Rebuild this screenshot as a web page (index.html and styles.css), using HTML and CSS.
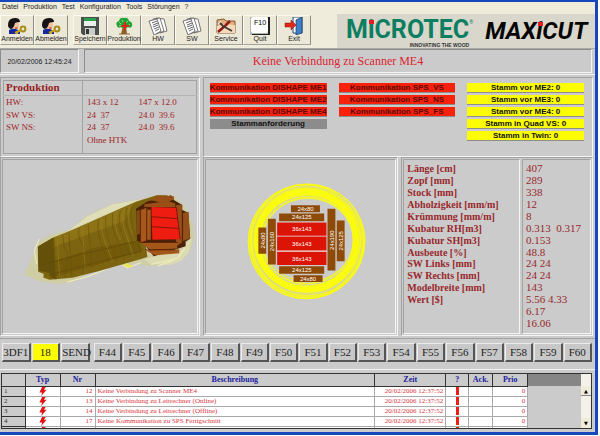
FILE: index.html
```html
<!DOCTYPE html>
<html lang="de">
<head>
<meta charset="utf-8">
<title>MAXiCUT</title>
<link rel="stylesheet" href="styles.css">
</head>
<body>
<div class="window">
  <nav class="menu">
    <a href="#">Datei</a><a href="#">Produktion</a><a href="#">Test</a><a href="#">Konfiguration</a><a href="#">Tools</a><a href="#">Störungen</a><a href="#">?</a>
  </nav>
  <header class="toolbar">
    <div class="group">
      <button class="tool"><svg viewBox="0 0 20 18"><path d="M2 17v-4l5-2 6 3v3z" fill="#18289c"/><circle cx="8" cy="8" r="4" fill="#f3c29a"/><path d="M1 8q0-7 7-7 5 0 5 4-3 0-5 1-1 5-4 6-3-1-3-4z" fill="#171216"/><path d="M8 11l3 0" stroke="#c22" stroke-width="1"/><circle cx="16" cy="12" r="2.4" fill="none" stroke="#a58c16" stroke-width="2"/><path d="M14 13l-6 3M10 14v3" stroke="#c2a51c" stroke-width="2"/></svg>Anmelden</button>
      <button class="tool"><svg viewBox="0 0 20 18"><path d="M2 17v-4l5-2 6 3v3z" fill="#18289c"/><circle cx="8" cy="8" r="4" fill="#f3c29a"/><path d="M1 8q0-7 7-7 5 0 5 4-3 0-5 1-1 5-4 6-3-1-3-4z" fill="#171216"/><path d="M8 11l3 0" stroke="#c22" stroke-width="1"/><circle cx="16" cy="12" r="2.4" fill="none" stroke="#a58c16" stroke-width="2"/><path d="M14 13l-6 3M10 14v3" stroke="#c2a51c" stroke-width="2"/></svg>Abmelden</button>
    </div>
    <div class="group">
      <button class="tool"><svg viewBox="0 0 20 18"><path d="M1 0h18v18H3l-2-2z" fill="#4b504d"/><path d="M4 1h12v8H4z" fill="#e9f1ea"/><path d="M4 1h12v3H4z" fill="#27a04b"/><path d="M5 11h10v7H5z" fill="#c9cdcb"/><path d="M6 12h3v5H6z" fill="#333"/></svg>Speichern</button>
      <button class="tool"><svg viewBox="0 0 20 18"><path d="M9 9h3l1 8H7z" fill="#8b6128"/><path d="M5 17h11" stroke="#8b6128"/><path d="M3 9q-2-4 2-5 1-4 5-3 4-1 5 3 4 1 3 5-1 3-4 1-4 3-7 0-3 2-4-1z" fill="#22a338"/><path d="M5 5l2 2M8 3l1 2M14 4l-2 2M5 9l3-1M14 9l2-2" stroke="#8fdc75"/><path d="M11 5v8M7 9h8" stroke="#e12418" stroke-width="2"/></svg>Produktion</button>
      <button class="tool"><svg viewBox="0 0 20 18"><g fill="#fff" stroke="#555" stroke-width=".8"><path d="M8 1l8 1 3 12-7 2z"/><path d="M5 2l7-1 4 13-8 3z"/><path d="M1 4l8-2 4 12-7 4z"/></g><path d="M4 6l5-2M5 8l5-2M5 10l5-2M6 12l5-2M7 14l4-2" stroke="#666"/></svg>HW</button>
      <button class="tool"><svg viewBox="0 0 20 18"><g fill="#fff" stroke="#555" stroke-width=".8"><path d="M8 1l8 1 3 12-7 2z"/><path d="M5 2l7-1 4 13-8 3z"/><path d="M1 4l8-2 4 12-7 4z"/></g><path d="M4 6l5-2M5 8l5-2M5 10l5-2M6 12l5-2M7 14l4-2" stroke="#666"/></svg>SW</button>
      <button class="tool"><svg viewBox="0 0 20 18"><path d="M1 3l7-1 2 2h9v12H1z" fill="#e5ad78" stroke="#6b3a1c" stroke-width=".8"/><path d="M1 9l6-2 12 1v8H1z" fill="#f6d9b8"/><path d="M2 15l8-7 4-4" stroke="#8b1c14" stroke-width="2.5" fill="none"/><path d="M3 5l4 4 9 5" stroke="#443c3a" stroke-width="2" fill="none"/><path d="M2 7l3-3" stroke="#e8e8e8" stroke-width="1.5"/></svg>Service</button>
      <button class="tool"><svg viewBox="0 0 20 18"><path d="M0 0h20v18H0z" fill="#b5b5b0"/><path d="M18 0h2v18H2v-1h16z" fill="#222"/><rect x="1" y="0" width="17" height="16" rx="2" fill="#fff"/><text class="keycap" x="4" y="8">F10</text></svg>Quit</button>
      <button class="tool"><svg viewBox="0 0 20 18"><path d="M9 0h9v16H9z" fill="#fff" stroke="#26456e"/><path d="M12 3l6-3v16l-6 2z" fill="#3e7fc6" stroke="#183a66" stroke-width=".7"/><path d="M1 6h6V3l5 5-5 5v-3H1z" fill="#e42818" stroke="#7c150d" stroke-width=".5"/></svg>Exit</button>
    </div>
    <div class="brand">
      <div class="microtec">M<span class="dot">i</span>CROTEC<sup>®</sup><small>INNOVATING THE WOOD</small></div>
      <div class="maxicut">MAX<span class="dot">i</span>CUT</div>
    </div>
  </header>

  <section class="status">
    <time class="clock">20/02/2006 12:45:24</time>
    <p class="message">Keine Verbindung zu Scanner ME4</p>
  </section>

  <main class="desk">
    <section class="panel product">
      <table>
        <colgroup><col class="c-name"><col class="c-a"><col class="c-b"></colgroup>
        <thead><tr><th>Produktion</th><th colspan="2"></th></tr></thead>
        <tbody>
          <tr><td>HW:</td><td>143 x 12</td><td>147 x 12.0</td></tr>
          <tr><td>SW VS:</td><td>24&nbsp; 37</td><td>24.0&nbsp; 39.6</td></tr>
          <tr><td>SW NS:</td><td>24&nbsp; 37</td><td>24.0&nbsp; 39.6</td></tr>
          <tr><td></td><td>Ohne HTK</td><td></td></tr>
        </tbody>
      </table>
    </section>

    <section class="panel signals">
      <ul>
        <li class="chip red">Kommunikation DISHAPE ME1</li>
        <li class="chip red">Kommunikation DISHAPE ME2</li>
        <li class="chip red">Kommunikation DISHAPE ME4</li>
        <li class="chip gray">Stammanforderung</li>
      </ul>
      <ul>
        <li class="chip red">Kommunikation SPS_VS</li>
        <li class="chip red">Kommunikation SPS_NS</li>
        <li class="chip red">Kommunikation SPS_FS</li>
      </ul>
      <ul>
        <li class="chip yellow">Stamm vor ME2: 0</li>
        <li class="chip yellow">Stamm vor ME3: 0</li>
        <li class="chip yellow">Stamm vor ME4: 0</li>
        <li class="chip yellow">Stamm in Quad VS: 0</li>
        <li class="chip yellow">Stamm in Twin: 0</li>
      </ul>
    </section>

    <section class="panel view">
      <svg viewBox="8 20 578 516">
        <path d="M100 300l10-35 40-22 55-15 50-40 80-38 90-14 55-14 38 5 35 35 22 50 3 40-10 35-26 28-40 17-60 5-40-10-30 12-20-10-40 10-60 25-30 20-50 6-55-8-45-20z" fill="#cfcda3"/>
        <path d="M205 230l55-42 75-36 85-14-60 24z" fill="#e0deb8"/>
        <path d="M430 315l110-25 25-35 8 0-10 40-22 25-34 13-60-2z" fill="#dcdab0"/>
        <path d="M450 332l80-20 20-28M470 336l50-18M365 334l15 8 40-16M200 384l60-16 60-24M108 330l-6-40 14-34" fill="none" stroke="#f1efc0" stroke-width="3"/>
        <path d="M112 278l45-26 60-24 190-84 60-19h30l22 14-90 40v60l10 70-24 8-120 34-80 20-68 6-18-6v-12l-16-6z" fill="#7d6410"/>
        <path d="M112 278l45-26 10 124-18-6v-12l-34-8z" fill="#645008"/>
        <path d="M160 252l60-25 180-80-30 55-110 40-98 36z" fill="#8d7316"/>
        <path d="M165 320l120-40 130-20 10 30-120 38-140 40z" fill="#735a0b"/>
        <path d="M135 265l8 92M160 252l6 124M186 243q4 50 12 50t-6 78M205 236l8 130M235 222q-5 30 10 50t0 86M262 212l12 130M292 198q-4 30 8 68l22 60M315 188q-5 45 14 85l20 50M335 180q-5 45 16 82l20 54M358 170q-10 45 10 83l20 56M378 162q-10 46 10 82l18 60M394 155q-12 45 8 88l16 56" fill="none" stroke="#69540a" stroke-width="2"/>
        <path d="M170 256l7 110M245 220l8 120M302 196q-4 35 14 76l18 48M345 176q-10 40 14 83M368 168q-8 40 10 80l18 55M387 160q-12 42 8 80" fill="none" stroke="#978023" stroke-width="2"/>
        <path d="M115 335l60-15 70-20 70-15 100-25M145 363l75-20 100-26 100-25" fill="none" stroke="#5c4906" stroke-width="2"/>
        <path d="M405 165l35-22 70-18 8 14 25 15v15l18 8 6 78-14 8v14l-95 30-28-35-22-12z" fill="#4c2106"/>
        <path d="M448 140l22-14 48 2v10l-30 10zM430 152l70-10 22 8v10h-92z" fill="#985016"/>
        <path d="M418 170l18-8v98l-18 6zM437 168h13v90h-13z" fill="#a7581b"/>
        <path d="M406 172l11-4v72l-11 4z" fill="#805013"/>
        <path d="M524 156l18-4v114l-18 12zM544 178l18-4 4 80-22 8z" fill="#94501a"/>
        <path d="M418 266h110v18l-80 4zM434 290l100-4v12l-72 6z" fill="#a3581a"/>
        <path d="M450 160l78 2 8 94-82 2z" fill="#ef1c12"/>
        <path d="M418 170v96M437 168v92M450 160v98M450 189l80 6M450 219l82 5M525 160l12 96M544 178v84M420 266h110M432 288h90" fill="none" stroke="#531305" stroke-width="2"/>
        <path d="M366 334l12-6 18 8-12 6z" fill="#eae85a"/>
      </svg>
    </section>

    <section class="panel view">
      <svg viewBox="18 20 576 516">
        <g fill="none" stroke="#fbfb10">
          <ellipse cx="325" cy="260" rx="153" ry="148" stroke-width="22"/>
          <ellipse cx="323" cy="264" rx="169" ry="165" stroke-width="4"/>
          <g stroke-width="2.5">
            <ellipse cx="323" cy="263" rx="177" ry="173"/>
            <ellipse cx="325" cy="260" rx="176" ry="172"/>
            <ellipse cx="320" cy="266" rx="174" ry="170"/>
            <ellipse cx="327" cy="258" rx="171" ry="169"/>
            <ellipse cx="324" cy="268" rx="173" ry="169"/>
            <ellipse cx="319" cy="262" rx="168" ry="172"/>
            <ellipse cx="328" cy="265" rx="170" ry="166"/>
            <ellipse cx="322" cy="257" rx="166" ry="166"/>
            <ellipse cx="326" cy="260" rx="140" ry="131"/>
            <ellipse cx="329" cy="262" rx="139" ry="134"/>
            <ellipse cx="324" cy="257" rx="141" ry="133"/>
            <ellipse cx="328" cy="258" rx="138" ry="126"/>
          </g>
        </g>
        <g fill="none" stroke="#d6d691" stroke-width="1">
          <ellipse cx="321" cy="264" rx="171" ry="167"/>
          <ellipse cx="326" cy="259" rx="166" ry="162"/>
          <ellipse cx="323" cy="261" rx="161" ry="163"/>
        </g>
        <g fill="#8e4b08">
          <path d="M276 153h88v21h-88zM240 178h137v23H240zM240 338h137v23H240zM284 365h88v21h-88zM177 220h24v80h-24zM206 194h24v139h-24zM387 163h24v188h-24zM415 199h24v124h-24z"/>
        </g>
        <path d="M234 205h150v129H234z" fill="#eee"/>
        <path d="M234 205h150v40H234zM234 248h150v42H234zM234 294h150v40H234z" fill="#dc1405"/>
        <g class="boards">
          <text x="320" y="170">24x80</text><text x="309" y="196">24x125</text>
          <text x="309" y="231">36x143</text><text x="309" y="276">36x143</text><text x="309" y="321">36x143</text>
          <text x="309" y="356">24x125</text><text x="328" y="382">24x80</text>
          <text transform="translate(196 260) rotate(-90)">24x80</text>
          <text transform="translate(225 263) rotate(-90)">24x160</text>
          <text transform="translate(406 259) rotate(-90)">24x190</text>
          <text transform="translate(434 261) rotate(-90)">24x125</text>
        </g>
      </svg>
    </section>

    <section class="panel params">
      <ul class="names">
        <li>Länge [cm]</li><li>Zopf [mm]</li><li>Stock [mm]</li><li>Abholzigkeit [mm/m]</li><li>Krümmung [mm/m]</li><li>Kubatur RH[m3]</li><li>Kubatur SH[m3]</li><li>Ausbeute [%]</li><li>SW Links [mm]</li><li>SW Rechts [mm]</li><li>Modelbreite [mm]</li><li>Wert [$]</li>
      </ul>
      <ul class="values">
        <li>407</li><li>289</li><li>338</li><li>12</li><li>8</li><li>0.313&nbsp; 0.317</li><li>0.153</li><li>48.8</li><li>24 24</li><li>24 24</li><li>143</li><li>5.56 4.33</li><li>6.17</li><li>16.06</li>
      </ul>
    </section>
  </main>

  <div class="keys">
    <div class="modes"><button>3DF1</button><button class="on">18</button><button>SEND</button></div>
    <div class="fkeys"><button>F44</button><button>F45</button><button>F46</button><button>F47</button><button>F48</button><button>F49</button><button>F50</button><button>F51</button><button>F52</button><button>F53</button><button>F54</button><button>F55</button><button>F56</button><button>F57</button><button>F58</button><button>F59</button><button>F60</button></div>
  </div>

  <section class="log">
    <table>
      <colgroup><col class="l-row"><col class="l-typ"><col class="l-nr"><col><col class="l-time"><col class="l-q"><col class="l-ack"><col class="l-prio"></colgroup>
      <thead><tr><th></th><th>Typ</th><th>Nr</th><th>Beschreibung</th><th>Zeit</th><th>?</th><th>Ack.</th><th>Prio</th></tr></thead>
      <tbody>
        <tr><th>1</th><td class="typ"><svg viewBox="0 0 8 10"><path d="M3 0h4L5 3h3L2 10l1-4H0z"/></svg></td><td class="num">12</td><td>Keine Verbindung zu Scanner ME4</td><td class="num">20/02/2006 12:37:52</td><td class="alarm"></td><td></td><td class="num">0</td></tr>
        <tr><th>2</th><td class="typ"><svg viewBox="0 0 8 10"><path d="M3 0h4L5 3h3L2 10l1-4H0z"/></svg></td><td class="num">13</td><td>Keine Verbindung zu Leitrechner (Online)</td><td class="num">20/02/2006 12:37:52</td><td class="alarm"></td><td></td><td class="num">0</td></tr>
        <tr><th>3</th><td class="typ"><svg viewBox="0 0 8 10"><path d="M3 0h4L5 3h3L2 10l1-4H0z"/></svg></td><td class="num">14</td><td>Keine Verbindung zu Leitrechner (Offline)</td><td class="num">20/02/2006 12:37:52</td><td class="alarm"></td><td></td><td class="num">0</td></tr>
        <tr><th>4</th><td class="typ"><svg viewBox="0 0 8 10"><path d="M3 0h4L5 3h3L2 10l1-4H0z"/></svg></td><td class="num">17</td><td>Keine Kommunikation zu SPS Fertigschnitt</td><td class="num">20/02/2006 12:37:52</td><td class="alarm"></td><td></td><td class="num">0</td></tr>
        <tr><th></th><td class="typ"><svg viewBox="0 0 8 10"><path d="M3 0h4L5 3h3L2 10l1-4H0z"/></svg></td><td></td><td></td><td></td><td class="alarm"></td><td></td><td></td></tr>
      </tbody>
    </table>
    <div class="filler"></div>
    <div class="scroll"><button aria-label="Nach oben">▲</button><button aria-label="Nach unten">▼</button></div>
  </section>
</div>
</body>
</html>
```
FILE: styles.css
```css
* { box-sizing: border-box; }

body {
  margin: 0;
  background: #fff;
  font-family: "Liberation Serif", serif;
}

ul { list-style: none; margin: 0; padding: 0; }
button { font: inherit; color: inherit; margin: 0; padding: 0; }

.window {
  display: flex;
  flex-direction: column;
  min-height: calc(100vh - 1px);
  margin-right: 2px;
  background: #cbcbcb;
  border: solid #1747bd;
  border-width: 2px 3px 3px 0;
}

/* menu and toolbar */
.menu {
  display: flex;
  gap: 5px;
  padding: 0 2px;
  height: 12px;
  background: #f0ecdc;
  font: 7px/10px "Liberation Sans", sans-serif;
}
.menu a { color: #222; text-decoration: none; }

.toolbar {
  display: flex;
  height: 35px;
  background: #f0ecdc;
  border-bottom: 1px solid #a9a9a4;
}
.group { display: flex; margin-right: 5px; padding: 1px 0 3px; }
.group + .group { margin-right: 26px; }
.tool {
  display: flex;
  flex-direction: column;
  align-items: center;
  justify-content: space-between;
  width: 34px;
  padding: 1px 0;
  background: #ece8d8;
  border: solid;
  border-width: 1px;
  border-color: #fbf9f0 #8f8d84 #a5a298 #fbf9f0;
  font: 7px/8px "Liberation Sans", sans-serif;
  color: #222;
}
.tool svg { width: 20px; height: 18px; }
.keycap { font: 7px "Liberation Sans", sans-serif; }

.brand {
  flex: 1;
  display: flex;
  gap: 12px;
  align-items: flex-start;
  padding: 5px 4px 0 9px;
  background: #d9d6cc;
  font: bold 25px/22px Roboto, sans-serif;
  white-space: nowrap;
}
.microtec { display: flex; position: relative; color: #0c7f62; }
.microtec sup { font-size: 5px; line-height: 6px; }
.microtec small {
  position: absolute;
  right: 4px;
  top: 24px;
  color: #333;
  font: bold 5px/5px "Liberation Sans", sans-serif;
}
.maxicut { color: #050505; font-size: 24px; line-height: 24px; font-style: italic; }
.dot { position: relative; }
.dot::after {
  content: "";
  position: absolute;
  left: 1px;
  top: 1px;
  width: 5px;
  height: 4px;
  background: #e81c24;
}
.maxicut .dot::after { left: 2px; top: 5px; }

/* status line */
.status {
  display: flex;
  gap: 5px;
  height: 26px;
  padding-right: 3px;
  border-bottom: 1px solid #f2f2f2;
}
.clock, .message {
  display: flex;
  align-items: center;
  justify-content: center;
  margin: 0 0 1px;
  border: 1px solid #8c8c8c;
  border-color: #8c8c8c #f4f4f4 #f4f4f4 #8c8c8c;
}
.clock { width: 79px; font: 7px "Liberation Sans", sans-serif; color: #222; }
.message { flex: 1; font-size: 12px; color: #dc2430; }

/* main panels */
.desk {
  flex: 1;
  display: grid;
  grid-template-columns: 200fr 196fr 192fr;
  grid-template-rows: 80px 1fr;
  column-gap: 3px;
  padding: 2px 2px 0 0;
}
.panel {
  min-width: 0;
  padding: 2px;
  border: 1px solid #a2a2a2;
  border-color: #a2a2a2 #f5f5f5 #f5f5f5 #a2a2a2;
}
.signals { grid-column: span 2; }

.product table {
  width: 100%;
  height: 100%;
  border-collapse: collapse;
  table-layout: fixed;
  border: 1px solid #a2a2a2;
  font-size: 9px;
  line-height: 12px;
  color: #a02428;
}
.product .c-name { width: 41%; }
.product .c-a { width: 27%; }
.product td, .product th { padding: 0 0 0 4px; text-align: left; vertical-align: top; }
.product th { height: 15px; font-size: 11px; border-bottom: 1px solid #b4b4b4; color: #981c20; }
.product tr > :first-child { border-right: 1px solid #a2a2a2; padding-left: 2px; }
.product tr:last-child td { height: 20px; }

.signals {
  display: grid;
  grid-template-columns: repeat(3, 1fr);
  gap: 12px;
  padding: 5px 8px 0 6px;
}
.signals ul { display: flex; flex-direction: column; gap: 2px; }
.chip {
  height: 10px;
  border-bottom: 1px solid #8c8c8c;
  font: bold 8px/9px "Liberation Sans", sans-serif;
  text-align: center;
  white-space: nowrap;
  color: #111;
}
.red { background: #f8220c; color: #5c0a08; }
.gray { background: #8c8c8c; }
.yellow { background: #fcfc04; }

.view { padding: 1px; }
.view svg {
  display: block;
  width: 100%;
  height: 100%;
  border: 1px solid #a2a2a2;
  border-color: #a2a2a2 #f5f5f5 #f5f5f5 #a2a2a2;
}
.boards { fill: #fff; font: 18px "Liberation Sans", sans-serif; text-anchor: middle; }

.params {
  display: grid;
  grid-template-columns: 117fr 69fr;
  gap: 2px;
  padding: 1px;
  line-height: 11px;
  color: #98282c;
}
.params ul {
  display: grid;
  grid-template-rows: repeat(14, 1fr);
  padding: 3px 0 3px 3px;
  border: 1px solid #a2a2a2;
  border-color: #a2a2a2 #f5f5f5 #f5f5f5 #a2a2a2;
  white-space: nowrap;
}
.names { font-size: 10px; font-weight: bold; }
.values { font-size: 11px; }

/* function keys */
.keys {
  display: flex;
  gap: 4px;
  margin-top: 2px;
  padding: 4px 3px 7px 2px;
  border-top: 1px solid #a2a2a2;
  border-bottom: 1px solid #f2f2f2;
}
.modes, .fkeys { display: grid; gap: 1px; }
.modes { flex: 88; grid-template-columns: repeat(3, 1fr); }
.fkeys { flex: 500; grid-template-columns: repeat(17, 1fr); }
.keys button {
  min-width: 0;
  height: 19px;
  background: #c8c8c8;
  border: solid;
  border-width: 1px 2px 2px 1px;
  border-color: #ececec #555 #555 #ececec;
  font-size: 11px;
  line-height: 14px;
  color: #222;
}
.keys .on { background: #fcfc04; }

/* message log */
.log {
  display: flex;
  margin: 3px 3px 3px 1px;
  height: 56px;
  overflow: hidden;
  border: 1px solid #333;
  background: #fff;
}
.log table {
  flex: 528;
  border-collapse: collapse;
  table-layout: fixed;
  align-self: flex-start;
  font-size: 7px;
  line-height: 9px;
  color: #d8343c;
}
.l-row { width: 23px; }
.l-typ, .l-nr, .l-prio { width: 35px; }
.l-time { width: 71px; }
.l-q { width: 23px; }
.l-ack { width: 24px; }
.log th, .log td { padding: 0 2px; border-right: 1px solid #aaa; border-bottom: 1px solid #aaa; white-space: nowrap; }
.log td { text-align: left; }
.log thead th {
  height: 12px;
  background: #cbcbcb;
  border-color: #333;
  font-size: 8px;
  color: #20209c;
}
.log tbody th { background: #cbcbcb; border-color: #333; font-weight: normal; text-align: left; color: #333; }
.log .num { text-align: right; }
.log .typ { text-align: center; }
.typ svg { display: block; width: 8px; height: 9px; margin: 0 auto; fill: #e01414; }
.log .alarm { background: linear-gradient(#e82018, #e82018) center / 3px 8px no-repeat; }
.filler { flex: 53; background: #cbcbcb; border-top: 12px solid #868686; }
.scroll {
  display: flex;
  flex-direction: column;
  justify-content: space-between;
  width: 10px;
  padding-top: 12px;
  background: #f4f2e8;
}
.scroll button {
  height: 10px;
  background: #f0ecdc;
  border: 0;
  border-bottom: 1px solid #888;
  font: 5px/8px "DejaVu Sans", sans-serif;
}
.scroll button:last-child { border-bottom: 0; }
```
